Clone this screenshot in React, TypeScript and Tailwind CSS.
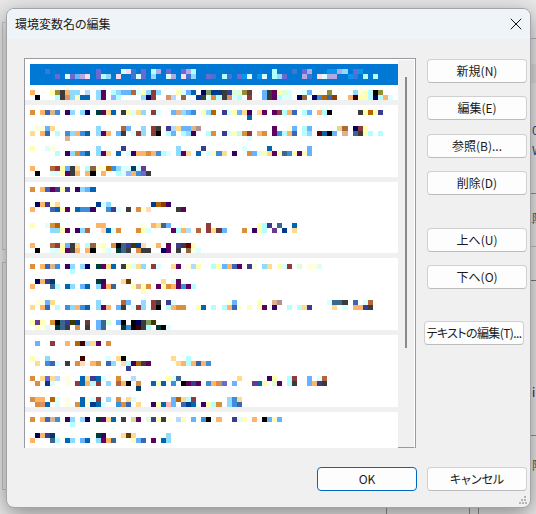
import { X } from "lucide-react";

const COLORS: Record<string, string> = {
  o: "#ffb366", O: "#db8f3b", k: "#000000", y: "#ffffb3", Y: "#ffdb8f", c: "#b3ffff", C: "#dbffff",
  s: "#8fdbff", b: "#66b3ff", B: "#3b8fdb", d: "#0066b3", D: "#003b8f", n: "#00005f", p: "#5f005f",
  P: "#3b3b8f", i: "#3b005f", r: "#8f3b3b", g: "#3b3b3b", t: "#b3663b", T: "#dbb38f", u: "#3b668f",
  l: "#3b66b3", m: "#8f663b", e: "#3b0000", E: "#660000", h: "#b36600", w: "#ffffdb", v: "#dbffdb",
  f: "#003b3b", a: "#8f8f3b", A: "#7f9f5f", G: "#3b3b00", q: "#6a6ad4", Q: "#b3a8e0", x: "#ffd9e8",
  z: "#3b78d4", j: "#dd8f66", J: "#ffdbb3", K: "#b3dbff", L: "#8fb3ff", M: "#663b8f", R: "#663b3b",
  S: "#b38f8f", H: "#8f3b00", W: "#663b00", F: "#003b6a", I: "#0a96ee", Z: "#dbdb8f", N: "#ffb3b3",
};

// [top of the line inside its group, blocks as "column+colour"]
type Line = [number, string];

const SELECTED: Line[] = [
  [5, "3z 13q 18C 19x 20z 22q 24c 25Q 27q 30q 31Q 32c 48c 52z 54q 55Q 59I 60I 61Q 62s 64q 65I"],
  [10, "5q 7C 8q 9b 10Q 11x 13q 14c 15s 17x 20z 21C 22q 24s 27C 28Q 30x 31z 32s 35q 36z 38c 39z 41q 42I 43C 45I 46C 48c 49s 50q 54Q 55z 57x 58C 59Q 60Q 63I 64z 66c 68c"],
];

const GROUP_TOP: Line[] = [
  [5, "0o 4y 5a 6g 7o 8s 9s 11K 13s 14p 16c 17s 18b 19b 20t 21C 22y 23s 24r 25s 29y 30C 31b 32d 34n 35A 36D 37D 38g 39P 40v 41v 42a 43R 46b 47g 48p 49y 50v 51C 54C 55b 57w 59a 64s 65w 66y 67c 68k 69a"],
  [10, "1k 5c 6g 7j 8s 9y 10d 11d 13s 14p 16L 17c 22s 23n 24r 27j 28K 30m 33D 34g 35C 36O 37c 38g 39j 40C 41c 43r 46b 47g 48p 49c 50C 51C 53n 54m 56n 57B 58h 59l 60H 63o 64e 65y 66y 67c 68n 69c 70o 71C"],
];

const GROUPS: { height: number; lines: Line[] }[] = [
  {
    height: 72,
    lines: [
      [5, "0O 2o 3l 4T 5B 7i 8s 10s 11n 13f 14p 15Y 16d 18g 19y 20C 21Y 22s 24r 25C 28b 29T 30s 31b 32B 34y 35s 36h 38P 39C 40y 41b 42Y 43i 45Y 46p 48p 49r 50c 51o 52l 54c 55b 57o 58c 59k 65g 66y 67h 68y 69P"],
      [10, "43d"],
      [21, "1w 2w 3b 4Y 13s 18t 19b 22s 24r 25g 27P 28K 29Y 30b 31b 32T 33S 48p 51w 52b 54c 55b 61Z 62t 64n 65r 66y"],
      [26, "0Y 2o 3l 5c 7B 8s 9o 10B 11d 13s 14p 15o 17b 18g 20C 21r 22s 24r 25k 27c 28b 30c 31s 32i 35c 36O 38P 39C 40y 41c 42O 43r 45o 46O 48p 49B 50c 51o 52l 54c 55s 57E 58d 59k 60b 62T 64u 65g 66y 67c 69c"],
      [31, "7T 43C"],
      [41, "0y 3C 4w 13s 18P 29s 34P 42C 47d 55b"],
      [46, "5c 7i 8s 9O 10B 11d 13s 14p 15Y 17d 19C 20i 21o 22o 23O 24o 25B 26c 27C 29s 30p 31Y 33d 35C 36y 37B 38Y 40i 43O 44b 45C 46y 47Y 48p 49y 50u 51B 52y 53p 54y 55b"],
      [61, "0o 4t 5r 6y 7b 8g 9Y 11c 12m 13w 14w 15h 16B 17s 18C 19C 20F 21C 22M"],
      [66, "1k 4C 5C 6y 7p 8g 9o 11o 12k 14o 17c 18C 19L 20o 21B 22q 23g"],
    ],
  },
  {
    height: 71,
    lines: [
      [5, "0O 2o 3l 4p 5P 6y 7P 9i 10s 11b 12d"],
      [20, "1n 2o 3P 4w 5Y 13D 14C 15s 24D 25h 26H 27i"],
      [25, "0o 4l 5d 6y 7p 9d 10B 11B 12i 15B 16P 17C 19g 21O 22w 23J 29g 30p"],
      [41, "0y 3C 4O 5h 13o 14o 22w 24o 25Y 26u 27b 30w 35r 45y 46c 47P 49u 52d"],
      [46, "4s 5s 6y 7p 9i 10s 11t 14J 15d 16C 17O 21O 22y 23C 28p 29c 30o 31K 33t 35r 36Y 37R 38b 42O 44i 45y 46c 48M 50D 52Y"],
      [61, "0o 4t 5r 6y 7b 8g 9Y 11c 12m 13w 14y 16O 17k 18u 19P 20G 21D 22J 24w 25o 27p 29P 30g 31E 32y"],
      [66, "1k 4C 5C 6y 7p 8g 9o 11o 12k 14w 15C 17f 18u 19g 21O 22g 23g 26n 27p 29g 31m 32w 33C"],
    ],
  },
  {
    height: 72,
    lines: [
      [6, "0O 2o 3l 4T 5B 7i 8s 10s 11n 13f 14p 15Y 16d 18g 19y 20C 21Y 22s 24r 25C 28Y 29p 31w 32K 33y 36c 37y 38b 39o 40l 41p 43P 44w 46s 47Y 49y 50C 51r 53v 55w 56w 57C"],
      [11, "8c"],
      [21, "1n 2o 3P 4F 13f 14i 18Y 19W 26Y 28C 29p"],
      [26, "0o 4u 5c 7d 8s 10b 11d 13s 14p 15o 16u 20y 21T 22y 23O 25p 26y 27O 28o 29p 30B 31p 32c"],
      [31, "22y"],
      [42, "1w 2w 3b 4Y 13s 18t 19b 22s 24r 25g 27P 28C 39w 40b 45y 48T 49S 59C 60u 61u 62g 64l 66C 67t"],
      [47, "0Y 2o 3l 5c 7B 8s 9o 10B 11d 13s 14p 15o 17b 18g 20C 21r 22s 24r 25k 27c 28o 29O 30O 33y 34d 36c 38c 39o 40l 41w 43y 45y 46p 48i 51c 53c 54Y 55P 60Y 62C 64o 65o 66P 67g"],
      [62, "0y 1M 2y 4O 5k 6u 7P 8G 9D 11R 13b 14u 15v 17b 18k 20k 21n 22g 23A 24G"],
      [67, "1y 2w 3C 5f 6u 7g 9O 11g 13b 14u 18f 19B 20k 21e 22g 23c 25f 26k 27C"],
    ],
  },
  {
    height: 72,
    lines: [
      [6, "1b 4r 7o 9h 10e 11K 12Y 13p 15O"],
      [21, "0y 3s 10e 15C 17Y 18k 28Y 31c"],
      [26, "1Y 3B 4l 5C 7g 9O 10J 12o 13O 15l 16s 18J 19c 20i 21h 22g 23p 29Y 30o 31c 32o 33u 34o 35B"],
      [31, "19P"],
      [41, "0O 2Y 3q 4Y 5K 7w 10d 11Y 12P 13d 14C 17O 20K 27y 28C 29u 41Y 47i 48y 51c 52r 55b 57C 58t"],
      [46, "1O 3D 4C 7w 9r 10d 11o 12c 13r 15s 17t 18o 19k 21O 24d 25y 26d 28B 30k 31p 32P 33p 35B 36o 37O 38q 40b 43w 44M 45d 46y 48v 49p 51c 52g 55b 56o 57P 58g"],
      [51, "21F"],
      [62, "0O 1o 2o 4h 5C 7w 10d 11w 12C 13r 15s 17O 19Y 20C 28b 29h 30Y 31c 32r 39s 40B 41Y"],
      [67, "1O 2j 3d 5C 7w 9O 10d 11w 12D 13d 14C 17B 18O 19l 21Y 24i 25y 26d 27N 28b 30l 31D 32d 34i 35y 36c 37O 39s 40B 41l"],
    ],
  },
];

const GROUP_LAST: Line[] = [
  [5, "0O 2o 3l 4T 5B 7i 8s 10s 11n 13f 14p 15Y 16d 18g 20Z 21p 23v 24P 25y 26g 27w 29K 30y 32b 34B 35k 37o 40P 41C 42y 44o 46k 47b 48y 49b"],
  [10, "8c"],
  [21, "1n 2o 3P 4F 13f 14i 18Y 19W 20Y 27s"],
  [26, "0o 4u 5c 7d 8s 10b 11d 13s 14p 15o 16u 20y 21b 22l 24p 26d 27s"],
];

function columnX(col: number) {
  return Math.round(col * 5.04);
}

function Mosaic({ lines, height, inset = 5 }: { lines: Line[]; height: number; inset?: number }) {
  return (
    <svg width={373 - inset} height={height} className="block" style={{ marginLeft: inset }} shapeRendering="crispEdges">
      {lines.flatMap(([top, blocks], row) =>
        blocks.split(" ").map((block) => {
          const col = parseInt(block, 10);
          const x = columnX(col);
          return (
            <rect
              key={`${row}-${block}`}
              x={x}
              y={top}
              width={columnX(col + 1) - x}
              height={5}
              fill={COLORS[block[block.length - 1]]}
            />
          );
        }),
      )}
    </svg>
  );
}

function SideButton({ label, className = "" }: { label: string; className?: string }) {
  return (
    <button
      type="button"
      className={`flex h-6 w-[100px] items-center justify-center rounded-[4px] border border-[#d0d0d0] border-b-[#bcbcbc] bg-[#fdfdfd] text-xs text-[#1a1a1a] ${className}`}
    >
      {label}
    </button>
  );
}

function ResizeGrip() {
  return (
    <svg width="8" height="8" className="absolute right-[3px] bottom-[3px]" fill="#b4b4b4" shapeRendering="crispEdges">
      <rect x="5" y="0" width="2" height="2" />
      <rect x="2" y="3" width="2" height="2" />
      <rect x="5" y="3" width="2" height="2" />
      <rect x="0" y="6" width="2" height="2" />
      <rect x="3" y="6" width="2" height="2" />
      <rect x="6" y="6" width="2" height="2" />
    </svg>
  );
}

export default function App() {
  return (
    <div
      className='relative h-[514px] w-[536px] overflow-hidden bg-[#e9e9e9] [font-feature-settings:"palt"]'
      style={{ fontFamily: '"Noto Sans CJK JP", "Noto Sans", sans-serif' }}
    >
      {/* window behind the dialog */}
      <div className="absolute top-[22px] left-[2px] h-[228px] w-4 border border-[#c9c9c9]" />
      <div className="absolute top-[262px] left-[2px] h-[228px] w-4 border border-[#c4c4c4]" />
      <div className="absolute top-[38px] right-0 h-px w-[6px] bg-[#b5b5b5]" />
      <div className="absolute top-[64px] right-0 h-[19px] w-[6px] bg-[#dcdcdc]" />
      <div className="absolute top-[193px] right-0 h-px w-[6px] bg-[#8f8f8f]" />
      <div className="absolute top-[222px] right-0 h-px w-[6px] bg-[#bdbdbd]" />
      <div className="absolute top-[246px] right-0 h-px w-[6px] bg-[#bdbdbd]" />
      <div className="absolute top-[280px] right-0 h-px w-[6px] bg-[#777777]" />
      <div className="absolute top-[435px] right-0 h-px w-[6px] bg-[#8f8f8f]" />
      <span className="absolute top-[122px] left-[532px] text-xs text-[#2a4a80]">0</span>
      <span className="absolute top-[142px] left-[532px] text-xs text-[#2a4a80]">W</span>
      <span className="absolute top-[210px] left-[532px] text-xs text-[#555555]">除</span>
      <span className="absolute top-[384px] left-[532px] text-xs text-[#5f005f]">i</span>
      <span className="absolute top-[457px] left-[532px] text-xs text-[#555555]">除</span>
      <div className="absolute bottom-0 left-[386px] h-[6px] w-[84px] border-x border-[#8f8f8f]" />
      <div className="absolute right-0 bottom-0 h-[6px] w-[58px] border-l border-[#8f8f8f]" />

      {/* dialog */}
      <div className="absolute top-2 left-[6px] flex h-[500px] w-[525px] flex-col overflow-hidden rounded-lg border border-[#a4a4a8] bg-[#f0f0f0] shadow-[0_6px_22px_rgba(0,0,0,0.42)]">
        <div className="flex h-[30px] shrink-0 items-center justify-between bg-[#eff4f9] pr-[4px] pl-[8px]">
          <span className="text-xs text-[#1a1a1a]">環境変数名の編集</span>
          <X size={20} strokeWidth={1.2} color="#111111" />
        </div>

        <div className="flex flex-1 pt-[19px] pl-[17px]">
          <div className="flex h-[390px] w-[392px] border-x border-t border-[#9a9aa2]">
            <div className="flex w-[373px] flex-col gap-[5px] bg-[#f0f0f0]">
              <div className="h-[41px] bg-white pt-[5px]">
                <div className="ml-[5px] h-[21px] bg-[#0078d4]">
                  <Mosaic lines={SELECTED} height={21} inset={0} />
                </div>
                <Mosaic lines={GROUP_TOP} height={15} />
              </div>
              {GROUPS.map((group, index) => (
                <div key={index} className="bg-white">
                  <Mosaic lines={group.lines} height={group.height} />
                </div>
              ))}
              <div className="flex-1 bg-white">
                <Mosaic lines={GROUP_LAST} height={35} />
              </div>
            </div>
            <div className="relative flex-1 border-t border-r border-b border-t-white border-r-white border-b-[#9a9aa2]">
              <div className="absolute top-[17px] left-[7px] h-[271px] w-[2px] bg-[#8a8a8a]" />
            </div>
          </div>

          <div className="ml-[11px] flex flex-col">
            <SideButton label="新規(N)" className="mt-px" />
            <SideButton label="編集(E)" className="mt-[13px]" />
            <SideButton label="参照(B)..." className="mt-[14px]" />
            <SideButton label="削除(D)" className="mt-[13px]" />
            <SideButton label="上へ(U)" className="mt-[33px]" />
            <SideButton label="下へ(O)" className="mt-[13px]" />
            <SideButton label="テキストの編集(T)..." className="mt-[32px] -ml-[3px] tracking-[-0.6px] whitespace-nowrap" />
          </div>
        </div>

        <div className="flex shrink-0 justify-end gap-[10px] pr-[3px] pb-[16px]">
          <button
            type="button"
            className="flex h-6 w-[100px] items-center justify-center rounded-[4px] border border-[#0067c0] bg-[#fdfdfd] text-xs text-[#1a1a1a]"
          >
            OK
          </button>
          <SideButton label="キャンセル" />
        </div>
        <ResizeGrip />
      </div>
    </div>
  );
}
